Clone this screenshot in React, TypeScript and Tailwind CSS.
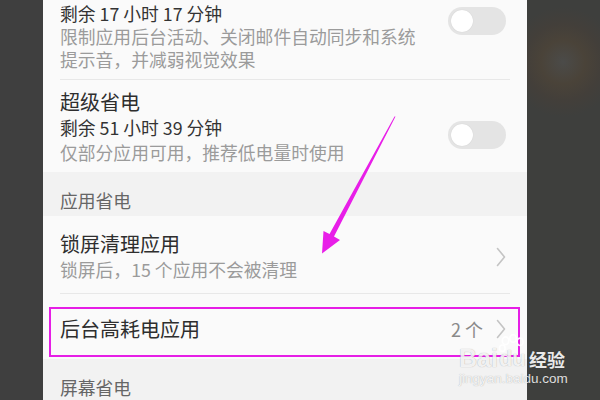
import React from "react";

function Toggle({ className = "" }: { className?: string }) {
  return (
    <div className={"w-[58px] h-[28px] rounded-full bg-[#e4e4e4] shrink-0 flex items-center px-[3px] " + className}>
      <div className="w-[22px] h-[22px] rounded-full bg-white shadow-[0_0_1px_rgba(0,0,0,0.15)]" />
    </div>
  );
}

function Chevron() {
  return (
    <svg width="10" height="20" viewBox="0 0 10 20" className="shrink-0">
      <polyline points="1.5,1.5 8.5,10 1.5,18.5" fill="none" stroke="#c4c4c4" strokeWidth="1.6" strokeLinecap="round" strokeLinejoin="round" />
    </svg>
  );
}

export default function App() {
  return (
    <div className="w-[600px] h-[400px] flex overflow-hidden relative bg-[#3e3e3e] font-['Noto_Sans_CJK_SC','Noto_Sans',sans-serif]">
      <div className="w-[43px] shrink-0 bg-[#3f3f3f]" />
      <div className="w-[484px] shrink-0 bg-[#fafafa] flex flex-col">
        {/* Row 1 (cut off) */}
        <div className="flex items-start justify-between pl-[17px] pr-[21px] pt-[1px] pb-[8px]">
          <div className="flex flex-col">
            <div className="text-[17.8px] leading-[24px] text-[#333]">剩余 17 小时 17 分钟</div>
            <div className="text-[17.8px] leading-[23px] text-[#9b9b9b]">限制应用后台活动、关闭邮件自动同步和系统</div>
            <div className="text-[17.8px] leading-[23px] text-[#9b9b9b]">提示音，并减弱视觉效果</div>
          </div>
          <Toggle className="mt-[6px]" />
        </div>
        <div className="h-px mx-[17px] bg-[#e8e8e8]" />
        {/* Row 2 */}
        <div className="flex items-start justify-between pl-[17px] pr-[21px] pt-[9px] pb-[7px]">
          <div className="flex flex-col">
            <div className="text-[20px] leading-[26px] text-[#2e2e2e]">超级省电</div>
            <div className="text-[17.8px] leading-[25px] text-[#333]">剩余 51 小时 39 分钟</div>
            <div className="text-[17.8px] leading-[25px] text-[#9b9b9b]">仅部分应用可用，推荐低电量时使用</div>
          </div>
          <Toggle className="mt-[32px]" />
        </div>
        {/* Header */}
        <div className="h-[44px] bg-[#f2f2f2] pl-[17px] pt-[16px]">
          <div className="text-[17.8px] leading-[24px] text-[#666]">应用省电</div>
        </div>
        {/* Row 3 */}
        <div className="flex items-center justify-between pl-[17px] pr-[21px] pt-[15px] pb-[11px]">
          <div className="flex flex-col">
            <div className="text-[20px] leading-[26px] text-[#2e2e2e]">锁屏清理应用</div>
            <div className="text-[17.8px] leading-[25px] text-[#9b9b9b]">锁屏后，15 个应用不会被清理</div>
          </div>
          <Chevron />
        </div>
        <div className="h-px mx-[17px] bg-[#e8e8e8]" />
        {/* Row 4 */}
        <div className="h-[65px] flex items-center justify-between pl-[17px] pr-[21px] pt-[4px]">
          <div className="text-[20px] leading-[26px] text-[#2e2e2e]">后台高耗电应用</div>
          <div className="flex items-center gap-[13px]">
            <span className="text-[18px] leading-[26px] text-[#8a8a8a]">2 个</span>
            <Chevron />
          </div>
        </div>
        {/* Header 2 */}
        <div className="flex-1 bg-[#f2f2f2] pl-[17px] pt-[16px]">
          <div className="text-[17.8px] leading-[24px] text-[#666]">屏幕省电</div>
        </div>
      </div>
      <div className="flex-1 bg-[radial-gradient(circle_at_36px_62px,#4b4b49_0px,#4a4339_22px,#433f3a_38px,#3e3f3d_55px)]" />

      {/* Annotation box */}
      <div className="absolute left-[49px] top-[307px] w-[471px] h-[50px] border-2 border-[#e61ee6]" />

      {/* Arrow */}
      <svg className="absolute left-0 top-0 pointer-events-none" width="600" height="400" viewBox="0 0 600 400">
        <polygon
          points="395.5,116.5 334,236.5 340,240 322,253.5 323.5,231 329.5,234 394.5,116.5"
          fill="#e81ee8"
        />
      </svg>

      {/* Watermark */}
      <div className="absolute left-[459px] top-[334px] flex flex-col pointer-events-none">
        <div className="flex items-end h-[36px]">
          <span className="text-[25px] leading-[24px] font-bold text-white/85 font-['Liberation_Sans',sans-serif] [text-shadow:0_0_1px_rgba(0,0,0,0.35)]">Bai</span>
          <div className="relative w-[28px] h-[36px]">
            <svg width="28" height="22" viewBox="0 0 26 20" className="absolute left-0 top-0">
              <g fill="none" stroke="rgba(255,255,255,0.9)" strokeWidth="1.6">
                <ellipse cx="7" cy="6" rx="3" ry="3.6" />
                <ellipse cx="14" cy="4" rx="3" ry="3.6" />
                <ellipse cx="20.5" cy="7" rx="2.8" ry="3.4" />
                <ellipse cx="4" cy="13" rx="2.6" ry="3" />
              </g>
            </svg>
            <span className="absolute left-[1px] bottom-0 text-[22px] leading-[22px] font-bold text-white/85 font-['Liberation_Sans',sans-serif] [text-shadow:0_0_1px_rgba(0,0,0,0.35)]">du</span>
          </div>
          <span className="ml-[3px] text-[18px] leading-[22px] font-bold text-white/90 [text-shadow:0_0_1px_rgba(0,0,0,0.3)]">经验</span>
        </div>
        <div className="text-[13.5px] leading-[16px] mt-[1px] text-white/85 font-['Liberation_Sans',sans-serif] [text-shadow:0_0_1px_rgba(0,0,0,0.35)]">jingyan.baidu.com</div>
      </div>
    </div>
  );
}
